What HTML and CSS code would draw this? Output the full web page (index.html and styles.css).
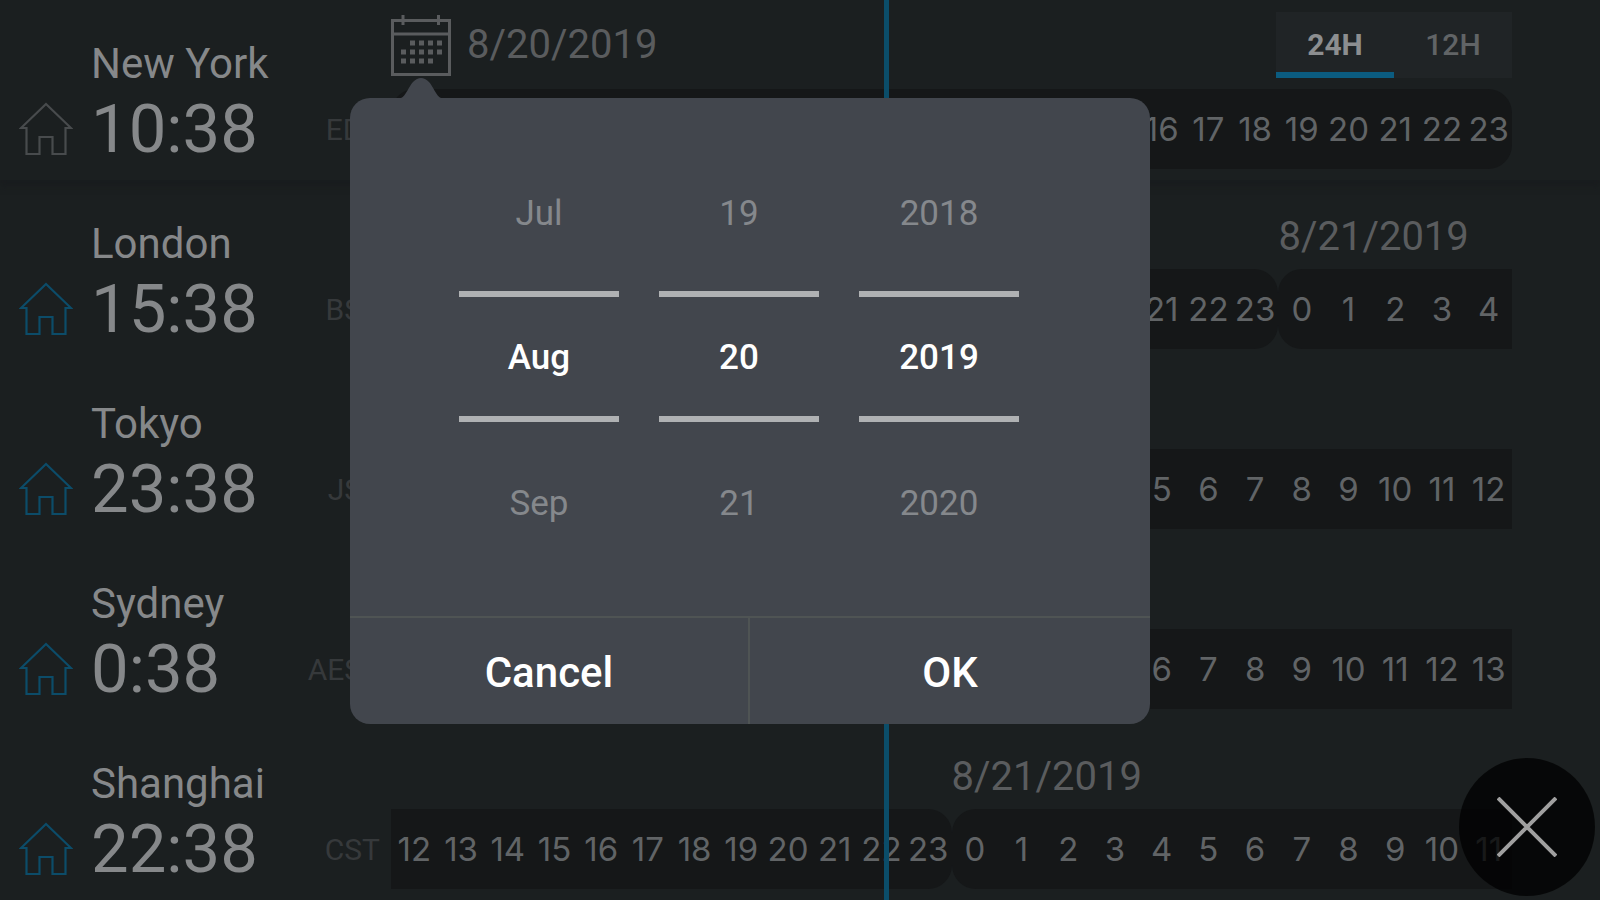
FILE: index.html
```html
<!DOCTYPE html>
<html lang="en">
<head>
<meta charset="utf-8">
<meta name="viewport" content="width=device-width, initial-scale=1">
<title>World Clock</title>
<link rel="stylesheet" href="styles.css">
</head>
<body>
<svg width="0" height="0" class="defs" aria-hidden="true">
  <symbol id="home" viewBox="0 0 54 54">
    <path d="M27 2 L52 26 H46.500 V52 H33.500 V35 H20.500 V52 H7.500 V26 H2 Z" fill="none" stroke="currentColor" stroke-width="2.200"/>
  </symbol>
</svg>
<main class="board">
  <section class="row row-home">
    <h2 class="city">New York</h2>
    <div class="top toolbar">
      <button class="date-button" type="button" aria-label="Choose date, 8/20/2019">
        <svg class="calendar" viewBox="0 0 60 62" aria-hidden="true">
          <g fill="none" stroke="currentColor" stroke-width="3">
            <path d="M1.500 6.500 H58.500 V60.500 H1.500 Z M1.500 20 H58.500"/>
            <path d="M12 1 V11 M47.500 1 V11"/>
          </g>
          <g fill="none" stroke="currentColor" stroke-width="5" stroke-dasharray="5 4">
            <path d="M19 29 H51"/><path d="M10 38 H51"/><path d="M10 47 H42"/>
          </g>
        </svg>
        <span>8/20/2019</span>
      </button>
      <div class="format" role="group" aria-label="Hour format">
        <button type="button" class="active" aria-pressed="true">24H</button>
        <button type="button" aria-pressed="false">12H</button>
      </div>
    </div>
    <button class="home" type="button" aria-label="Home city"><svg><use href="#home"/></svg></button>
    <time class="time">10:38</time>
    <span class="zone">EDT</span>
    <div class="track" data-start="0"></div>
  </section>
  <section class="row">
    <h2 class="city">London</h2>
    <div class="top hours"><span class="date" style="grid-column-start:20">8/21/2019</span></div>
    <button class="home" type="button" aria-label="Set London as home"><svg><use href="#home"/></svg></button>
    <time class="time">15:38</time>
    <span class="zone">BST</span>
    <div class="track" data-start="5"></div>
  </section>
  <section class="row">
    <h2 class="city">Tokyo</h2>
    <button class="home" type="button" aria-label="Set Tokyo as home"><svg><use href="#home"/></svg></button>
    <time class="time">23:38</time>
    <span class="zone">JST</span>
    <div class="track" data-start="13"></div>
  </section>
  <section class="row">
    <h2 class="city">Sydney</h2>
    <button class="home" type="button" aria-label="Set Sydney as home"><svg><use href="#home"/></svg></button>
    <time class="time">0:38</time>
    <span class="zone">AEST</span>
    <div class="track" data-start="14"></div>
  </section>
  <section class="row">
    <h2 class="city">Shanghai</h2>
    <div class="top hours"><span class="date" style="grid-column-start:13">8/21/2019</span></div>
    <button class="home" type="button" aria-label="Set Shanghai as home"><svg><use href="#home"/></svg></button>
    <time class="time">22:38</time>
    <span class="zone">CST</span>
    <div class="track" data-start="12"></div>
  </section>
  <div class="now-line"></div>

  <div class="picker" role="dialog" aria-label="Choose date">
    <svg class="pointer" viewBox="0 0 40 20" aria-hidden="true"><path d="M0 20 C5 18 8 8 12 4 Q20 -4 28 4 C32 8 35 18 40 20 Z" fill="currentColor"/></svg>
    <div class="wheels">
      <div class="wheel">
        <button type="button">Jul</button><button type="button" class="chosen">Aug</button><button type="button">Sep</button>
      </div>
      <div class="wheel">
        <button type="button">19</button><button type="button" class="chosen">20</button><button type="button">21</button>
      </div>
      <div class="wheel">
        <button type="button">2018</button><button type="button" class="chosen">2019</button><button type="button">2020</button>
      </div>
    </div>
    <div class="actions">
      <button type="button">Cancel</button>
      <button type="button">OK</button>
    </div>
  </div>

  <button class="close" type="button" aria-label="Close">
    <svg viewBox="0 0 60 60" aria-hidden="true"><path d="M1 1 L59 59 M59 1 L1 59" fill="none" stroke="currentColor" stroke-width="4"/></svg>
  </button>
</main>
<script src="script.js"></script>
</body>
</html>
```

FILE: styles.css
```css
* { box-sizing: border-box; }

body {
  margin: 0;
  background: #1b1f20;
  color: #86888a;
  font-family: Roboto, "Liberation Sans", sans-serif;
}

button {
  margin: 0;
  padding: 0;
  border: 0;
  background: none;
  color: inherit;
  font: inherit;
  cursor: pointer;
}

.defs { position: absolute; }

.board {
  position: relative;
  display: grid;
  grid-auto-rows: 1fr;
  min-height: 100vh;
  overflow: hidden;
}

/* One city: name and dates above, clock and hours below */
.row {
  display: grid;
  grid-template-columns: 91px 200px 89px minmax(0, 1fr);
  grid-template-rows: 89px 80px;
  align-content: start;
  padding-right: 88px;
}

.row-home { box-shadow: 0 6px 6px #191c1e; }

.city {
  grid-area: 1 / 2;
  align-self: end;
  margin: 0;
  font-size: 42px;
  font-weight: 400;
  line-height: 50px;
  white-space: nowrap;
}

.top {
  grid-area: 1 / 4;
  margin-left: 11px;
  color: #5a5c5e;
  font-size: 40px;
}

.toolbar {
  display: flex;
  align-items: center;
  justify-content: space-between;
}

.date-button {
  display: flex;
  align-items: center;
  gap: 16px;
}

.calendar { width: 60px; height: 62px; }

.format {
  display: flex;
  width: 236px;
  height: 66px;
  background: #202426;
  font-size: 30px;
  font-weight: 500;
}

.format button {
  flex: 1;
  border-top: 6px solid transparent;
  border-bottom: 6px solid transparent;
  color: #616466;
}

.format .active {
  border-bottom-color: #0b5c80;
  color: #8c8e90;
  font-weight: 700;
}

.hours {
  display: grid;
  grid-template-columns: repeat(24, minmax(0, 1fr));
  align-content: end;
  padding-bottom: 8px;
}

.date { line-height: 48px; white-space: nowrap; }

.home {
  grid-area: 2 / 1;
  align-self: center;
  justify-self: center;
  width: 54px;
  height: 54px;
  color: #0c4c69;
}

.home svg { display: block; width: 54px; height: 54px; }

.row-home .home { color: #484b4d; }

.time {
  grid-area: 2 / 2;
  font-size: 67px;
  line-height: 80px;
}

.zone {
  grid-area: 2 / 3;
  align-self: center;
  justify-self: end;
  color: #36393b;
  font-size: 30px;
}

.track {
  grid-area: 2 / 4;
  display: flex;
  margin-left: 11px;
  color: #616466;
  font-family: Inter, Roboto, sans-serif;
  font-size: 33px;
}

.day {
  display: grid;
  grid-auto-flow: column;
  grid-auto-columns: minmax(0, 1fr);
  align-items: center;
  background: #151718;
  text-align: center;
}

.day span { display: flex; justify-content: center; }
.day .covered { visibility: hidden; }

.day.begins { border-top-left-radius: 24px; border-bottom-left-radius: 24px; }
.day.ends { border-top-right-radius: 24px; border-bottom-right-radius: 24px; }

.now-line {
  position: absolute;
  top: 0;
  bottom: 0;
  left: calc(391px + (100% - 479px) * 0.44);
  width: 5px;
  background: #0b4d69;
}

/* Date popover over the board */
.picker {
  position: absolute;
  top: 98px;
  left: 350px;
  width: 50%;
  border-radius: 20px;
  background: #42464d;
  color: #85888c;
}

.pointer {
  position: absolute;
  bottom: 100%;
  left: 51px;
  width: 40px;
  height: 20px;
  color: #42464d;
}

.wheels {
  display: grid;
  grid-template-columns: repeat(3, 1fr);
  gap: 40px;
  padding: 48px 131px 47px 109px;
}

.wheel {
  display: grid;
  grid-template-rows: 145px 131px 147px;
  font-size: 35px;
}

.wheel button { padding: 2px 0 0; }

.wheel .chosen {
  border-top: 6px solid #afb1b3;
  border-bottom: 6px solid #afb1b3;
  color: #fff;
  font-weight: 500;
}

.wheel button:first-child { padding-bottom: 12px; }
.wheel button:last-child { padding-top: 16px; }

.actions {
  display: grid;
  grid-template-columns: 398px 1fr;
  grid-template-columns: minmax(0, 398fr) minmax(0, 402fr);
  border-top: 2px solid #4f5454;
  color: #fff;
  font-size: 42px;
  font-weight: 500;
}

.actions button { height: 106px; padding-top: 2px; }
.actions button + button { border-left: 2px solid #4f5454; }

.close {
  position: absolute;
  right: 5px;
  bottom: 4px;
  display: grid;
  place-items: center;
  width: 136px;
  height: 138px;
  border-radius: 50%;
  background: rgba(0, 0, 0, 0.75);
  color: #a0a0a0;
}

.close svg { width: 60px; height: 60px; }
```

FILE: script.js
```js
// Fills each track with 24 hours, split into one block per calendar day.
document.querySelectorAll('.track').forEach(function (track) {
  var start = Number(track.dataset.start);
  var blocks = [[start, 24], [0, start]];
  blocks.forEach(function (range) {
    var count = range[1] - range[0];
    if (count === 0) return;
    var day = document.createElement('div');
    day.className = 'day';
    if (range[0] === 0) day.classList.add('begins');
    if (range[1] === 24) day.classList.add('ends');
    day.style.flex = count + ' 1 0';
    for (var hour = range[0]; hour < range[1]; hour++) {
      var cell = document.createElement('span');
      cell.textContent = hour;
      day.appendChild(cell);
    }
    track.appendChild(day);
  });
});

// Hours that lie wholly behind the open date picker are not painted.
function markCovered() {
  var box = document.querySelector('.picker').getBoundingClientRect();
  document.querySelectorAll('.day span').forEach(function (cell) {
    var r = cell.getBoundingClientRect();
    cell.classList.toggle('covered',
      r.left >= box.left && r.right <= box.right && r.top >= box.top && r.bottom <= box.bottom);
  });
}
markCovered();
window.addEventListener('resize', markCovered);
```
